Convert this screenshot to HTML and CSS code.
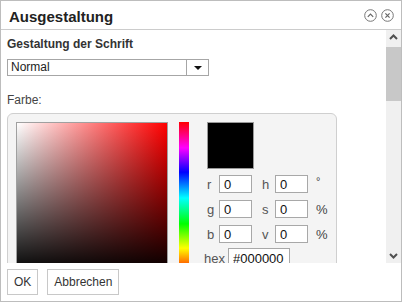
FILE: index.html
```html
<!DOCTYPE html>
<html lang="de">
  <head>
    <meta charset="UTF-8" />
    <title>Ausgestaltung</title>
    <link rel="stylesheet" href="styles.css">
  </head>
  <body>
    <div class="dialog">
      <div class="titlebar">
        <span class="title">Ausgestaltung</span>
        <span class="title-icons">
          <svg width="13" height="13" viewBox="0 0 13 13">
            <circle cx="6.5" cy="6.5" r="5.8" fill="none" stroke="#777" stroke-width="1" />
            <path d="M3.8 7.8 L6.5 5.1 L9.2 7.8" fill="none" stroke="#666" stroke-width="1.2" />
          </svg>
          <svg width="13" height="13" viewBox="0 0 13 13">
            <circle cx="6.5" cy="6.5" r="5.8" fill="none" stroke="#777" stroke-width="1" />
            <path d="M4.4 4.4 L8.6 8.6 M8.6 4.4 L4.4 8.6" fill="none" stroke="#666" stroke-width="1.2" />
          </svg>
        </span>
      </div>

      <div class="main">
        <div class="content">
          <div class="section-title">Gestaltung der Schrift</div>
          <div class="select">
            <span class="select-value">Normal</span>
            <span class="select-button"><span class="caret"></span></span>
          </div>

          <div class="field-label">Farbe:</div>

          <div class="picker">
            <div class="sv-box"></div>
            <div class="hue-bar"></div>
            <div class="picker-side">
              <div class="swatch"></div>
              <div class="value-row">
                <span class="vlabel">r</span><input class="vinput" value="0" />
                <span class="vlabel second">h</span><input class="vinput" value="0" />
                <span class="unit deg">°</span>
              </div>
              <div class="value-row">
                <span class="vlabel">g</span><input class="vinput" value="0" />
                <span class="vlabel second">s</span><input class="vinput" value="0" />
                <span class="unit">%</span>
              </div>
              <div class="value-row">
                <span class="vlabel">b</span><input class="vinput" value="0" />
                <span class="vlabel second">v</span><input class="vinput" value="0" />
                <span class="unit">%</span>
              </div>
              <div class="value-row hex-row">
                <span class="hex-label">hex</span><input class="hex-input" value="#000000" />
              </div>
            </div>
          </div>
        </div>

        <div class="scrollbar">
          <div class="scroll-btn">
            <svg width="15" height="15" viewBox="0 0 15 15">
              <path d="M4 9 L7.5 5.5 L11 9" fill="none" stroke="#505050" stroke-width="2" />
            </svg>
          </div>
          <div class="scroll-track">
            <div class="scroll-thumb"></div>
          </div>
          <div class="scroll-btn">
            <svg width="15" height="15" viewBox="0 0 15 15">
              <path d="M4 6 L7.5 9.5 L11 6" fill="none" stroke="#505050" stroke-width="2" />
            </svg>
          </div>
        </div>
      </div>

      <div class="footer">
        <button class="btn">OK</button>
        <button class="btn">Abbrechen</button>
      </div>
    </div>
  </body>
</html>
```

FILE: styles.css
```css
body {
  margin: 0;
  font-family: "Liberation Sans", Arial, sans-serif;
  font-size: 12px;
  color: #333333;
  background-color: #ffffff;
}

.dialog {
  width: 402px;
  height: 302px;
  box-sizing: border-box;
  border: 1px solid #bdbdbd;
  display: flex;
  flex-direction: column;
  overflow: hidden;
}

.titlebar {
  height: 28px;
  flex: none;
  border-bottom: 1px solid #cccccc;
  display: flex;
  align-items: center;
  justify-content: space-between;
  padding: 0 7px 0 8px;
}

.title {
  font-size: 15px;
  font-weight: bold;
  color: #222222;
  margin-top: 2px;
}

.title-icons {
  display: flex;
  gap: 4px;
  margin-top: 1px;
}

.title-icons svg {
  display: block;
}

.main {
  height: 233px;
  flex: none;
  display: flex;
}

.content {
  flex: 1;
  overflow: hidden;
  padding: 7px 0 0 6px;
}

.section-title {
  font-weight: bold;
  line-height: 14px;
  color: #333333;
}

.select {
  margin-top: 8px;
  width: 202px;
  height: 17px;
  box-sizing: border-box;
  border: 1px solid #a6a6a6;
  display: flex;
  align-items: center;
  color: #222222;
}

.select-value {
  flex: 1;
  padding-left: 3px;
  line-height: 15px;
}

.select-button {
  width: 21px;
  height: 15px;
  border-left: 1px solid #a6a6a6;
  display: flex;
  align-items: center;
  justify-content: center;
}

.caret {
  width: 0;
  height: 0;
  border-left: 4px solid transparent;
  border-right: 4px solid transparent;
  border-top: 4px solid #111111;
}

.field-label {
  margin-top: 17px;
  line-height: 14px;
  color: #444444;
}

.picker {
  margin-top: 6px;
  width: 330px;
  height: 200px;
  box-sizing: border-box;
  border: 1px solid #cfcfcf;
  border-radius: 6px;
  background-color: #f4f4f4;
  padding: 8px;
  display: flex;
  align-items: flex-start;
}

.sv-box {
  width: 150px;
  height: 150px;
  flex: none;
  border: 1px solid #a0a0a0;
  background: linear-gradient(to top, #000000, rgba(0, 0, 0, 0)),
    linear-gradient(to right, #ffffff, #ff0000);
}

.hue-bar {
  width: 10px;
  height: 152px;
  flex: none;
  margin-left: 11px;
  background: linear-gradient(
    to bottom,
    #ff0000 0%,
    #ff00ff 17%,
    #0000ff 33%,
    #00ffff 50%,
    #00ff00 67%,
    #ffff00 83%,
    #ff0000 100%
  );
}

.picker-side {
  margin-left: 18px;
  display: flex;
  flex-direction: column;
}

.swatch {
  width: 47px;
  height: 47px;
  box-sizing: border-box;
  border: 1px solid #999999;
  background-color: #000000;
  margin-bottom: 6px;
}

.value-row {
  display: flex;
  align-items: center;
  height: 18px;
  margin-bottom: 7px;
}

.vlabel {
  width: 12px;
  color: #555555;
  font-size: 13px;
}

.vlabel.second {
  margin-left: 10px;
  width: 13px;
}

.vinput,
.hex-input {
  height: 18px;
  box-sizing: border-box;
  border: 1px solid #a8a8a8;
  padding: 0 4px;
  font-family: "Liberation Sans", Arial, sans-serif;
  font-size: 13px;
  color: #111111;
  background-color: #ffffff;
  outline: none;
}

.vinput {
  width: 33px;
}

.unit {
  margin-left: 8px;
  font-size: 13px;
  color: #444444;
}

.unit.deg {
  font-size: 11px;
  margin-top: -6px;
}

.hex-row {
  margin-top: -2px;
  margin-left: -3px;
  height: 20px;
}

.hex-label {
  font-size: 13px;
  color: #555555;
  margin-right: 3px;
}

.hex-input {
  width: 62px;
  height: 20px;
  padding: 0 4px;
}

.scrollbar {
  width: 15px;
  flex: none;
  background-color: #f0f0f0;
  display: flex;
  flex-direction: column;
}

.scroll-btn {
  height: 15px;
  flex: none;
}

.scroll-btn svg {
  display: block;
}

.scroll-track {
  flex: 1;
  padding-top: 2px;
}

.scroll-thumb {
  height: 54px;
  background-color: #c8c8c8;
}

.footer {
  flex: 1;
  padding: 6px 0 0 6px;
  display: flex;
  gap: 9px;
  align-items: flex-start;
}

.btn {
  height: 26px;
  padding: 0 6px;
  border: 1px solid #c8c8c8;
  background-color: #ffffff;
  font-family: "Liberation Sans", Arial, sans-serif;
  font-size: 12px;
  color: #333333;
}
```
